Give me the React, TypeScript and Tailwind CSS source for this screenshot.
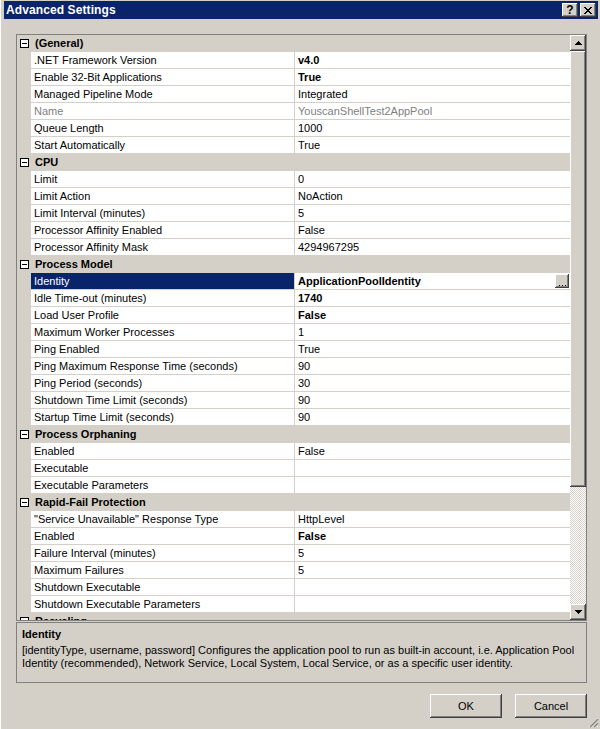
import React from "react";

type Row =
  | { cat: string }
  | {
      name: string;
      value: string;
      bold?: boolean;
      disabled?: boolean;
      selected?: boolean;
      button?: boolean;
    };

const rows: Row[] = [
  { cat: "(General)" },
  { name: ".NET Framework Version", value: "v4.0", bold: true },
  { name: "Enable 32-Bit Applications", value: "True", bold: true },
  { name: "Managed Pipeline Mode", value: "Integrated" },
  { name: "Name", value: "YouscanShellTest2AppPool", disabled: true },
  { name: "Queue Length", value: "1000" },
  { name: "Start Automatically", value: "True" },
  { cat: "CPU" },
  { name: "Limit", value: "0" },
  { name: "Limit Action", value: "NoAction" },
  { name: "Limit Interval (minutes)", value: "5" },
  { name: "Processor Affinity Enabled", value: "False" },
  { name: "Processor Affinity Mask", value: "4294967295" },
  { cat: "Process Model" },
  { name: "Identity", value: "ApplicationPoolIdentity", bold: true, selected: true, button: true },
  { name: "Idle Time-out (minutes)", value: "1740", bold: true },
  { name: "Load User Profile", value: "False", bold: true },
  { name: "Maximum Worker Processes", value: "1" },
  { name: "Ping Enabled", value: "True" },
  { name: "Ping Maximum Response Time (seconds)", value: "90" },
  { name: "Ping Period (seconds)", value: "30" },
  { name: "Shutdown Time Limit (seconds)", value: "90" },
  { name: "Startup Time Limit (seconds)", value: "90" },
  { cat: "Process Orphaning" },
  { name: "Enabled", value: "False" },
  { name: "Executable", value: "" },
  { name: "Executable Parameters", value: "" },
  { cat: "Rapid-Fail Protection" },
  { name: '"Service Unavailable" Response Type', value: "HttpLevel" },
  { name: "Enabled", value: "False", bold: true },
  { name: "Failure Interval (minutes)", value: "5" },
  { name: "Maximum Failures", value: "5" },
  { name: "Shutdown Executable", value: "" },
  { name: "Shutdown Executable Parameters", value: "" },
  { cat: "Recycling" },
];

const raised =
  "bg-[#d4d0c8] shadow-[inset_-1px_-1px_#404040,inset_1px_1px_#ffffff,inset_-2px_-2px_#808080]";

function MinusBox() {
  return (
    <div className="ml-[3px] w-[9px] h-[9px] border border-[#000] bg-[#ffffff] flex items-center justify-center">
      <div className="w-[5px] h-[1px] bg-[#000]" />
    </div>
  );
}

function GridRow({ row }: { row: Row }) {
  if ("cat" in row) {
    return (
      <div className="h-[17px] shrink-0 flex items-center bg-[#d4d0c8]">
        <div className="w-[14px] h-full flex items-center">
          <MinusBox />
        </div>
        <div className="pl-[4px] font-bold text-[11px] leading-[13px] whitespace-nowrap">{row.cat}</div>
      </div>
    );
  }
  return (
    <div className="h-[17px] shrink-0 flex bg-[#d4d0c8]">
      <div className="w-[14px] h-full" />
      <div
        className={`w-[263px] h-[16px] flex items-center pl-[3px] whitespace-nowrap overflow-hidden text-[11px] ${
          row.selected ? "bg-[#0a246a] text-[#ffffff]" : row.disabled ? "bg-[#ffffff] text-[#808080]" : "bg-[#ffffff] text-[#000]"
        }`}
      >
        {row.name}
      </div>
      <div className="w-[1px] h-[16px] bg-[#d4d0c8]" />
      <div
        className={`flex-1 h-[16px] bg-[#ffffff] flex items-center pl-[3px] whitespace-nowrap overflow-hidden text-[11px] ${
          row.bold ? "font-bold" : ""
        } ${row.disabled ? "text-[#808080]" : "text-[#000]"}`}
      >
        <span>{row.value}</span>
        {row.button && (
          <div className={`ml-auto mr-[1px] w-[14px] h-[14px] ${raised} flex items-end justify-center pb-[2px]`}>
            <svg width="7" height="1" viewBox="0 0 7 1">
              <rect x="0" y="0" width="1" height="1" fill="#000" />
              <rect x="3" y="0" width="1" height="1" fill="#000" />
              <rect x="6" y="0" width="1" height="1" fill="#000" />
            </svg>
          </div>
        )}
      </div>
    </div>
  );
}

function ScrollBar() {
  return (
    <div className="w-[16px] h-full flex flex-col shrink-0">
      <div className={`h-[16px] ${raised} flex items-center justify-center`}>
        <svg width="7" height="4" viewBox="0 0 7 4">
          <path d="M3 0h1v1h1v1h1v1h1v1H0V3h1V2h1V1h1z" fill="#000" />
        </svg>
      </div>
      <div className={`h-[436px] ${raised}`} />
      <div className="h-[117px] bg-[image:repeating-conic-gradient(#d4d0c8_0%_25%,#ffffff_0%_50%)] bg-size-[2px_2px]" />
      <div className={`h-[16px] ${raised} flex items-center justify-center`}>
        <svg width="7" height="4" viewBox="0 0 7 4">
          <path d="M0 0h7v1H6v1H5v1H4v1H3V3H2V2H1V1H0z" fill="#000" />
        </svg>
      </div>
    </div>
  );
}

function Button({ label }: { label: string }) {
  return (
    <div
      className={`w-[72px] h-[24px] ${raised} flex items-center justify-center text-[11px] text-[#000]`}
    >
      {label}
    </div>
  );
}

export default function App() {
  return (
    <div className="relative w-[600px] h-[729px] bg-[#d4d0c8] font-['Liberation_Sans',Arial,sans-serif] text-[#000] overflow-hidden border-l border-l-[#ffffff] flex flex-col pt-[1px]">
      {/* Title bar */}
      <div className="ml-[3px] mr-[2px] h-[18px] bg-[#0a246a] flex items-center pl-[2px] pr-[2px] shrink-0">
        <div className="text-[#ffffff] font-bold text-[12px] leading-[14px] tracking-[0.1px]">Advanced Settings</div>
        <div className="ml-auto flex gap-[2px]">
          <div className={`w-[16px] h-[14px] ${raised} flex items-center justify-center font-bold text-[12px] leading-[12px]`}>
            ?
          </div>
          <div className={`w-[16px] h-[14px] ${raised} flex items-center justify-center`}>
            <svg width="8" height="7" viewBox="0 0 8 7">
              <path
                d="M0 0h2v1h1v1h2V1h1V0h2v1H7v1H6v1H5v1h1v1h1v1h1v1H6V6H5V5H3v1H2v1H0V6h1V5h1V4h1V3H2V2H1V1H0z"
                fill="#000"
              />
            </svg>
          </div>
        </div>
      </div>

      <div className="pl-[15px] pr-[13px] flex flex-col">
        {/* Property grid */}
        <div className="mt-[15px] h-[587px] border border-[#808080] flex">
          <div className="w-[553px] h-full overflow-hidden flex flex-col">
            {rows.map((r, i) => (
              <GridRow key={i} row={r} />
            ))}
          </div>
          <ScrollBar />
        </div>

        {/* Description */}
        <div className="mt-[1px] h-[61px] border border-[#808080] pl-[5px] pt-[5px]">
          <div className="font-bold text-[11px] leading-[13px]">Identity</div>
          <div className="mt-[3px] text-[11px] leading-[13px] whitespace-nowrap">
            [identityType, username, password] Configures the application pool to run as built-in account, i.e. Application Pool
            <br />
            Identity (recommended), Network Service, Local System, Local Service, or as a specific user identity.
          </div>
        </div>

        {/* Buttons */}
        <div className="mt-[11px] flex justify-end gap-[13px]">
          <Button label="OK" />
          <Button label="Cancel" />
        </div>
      </div>

      {/* Resize grip */}
      <svg className="absolute right-[1px] bottom-[1px]" width="11" height="11" viewBox="0 0 11 11">
        <path d="M10 1L1 10M10 5L5 10M10 9L9 10" stroke="#ffffff" strokeWidth="1" />
        <path d="M10 2L2 10M10 6L6 10" stroke="#808080" strokeWidth="1.4" />
      </svg>
    </div>
  );
}
